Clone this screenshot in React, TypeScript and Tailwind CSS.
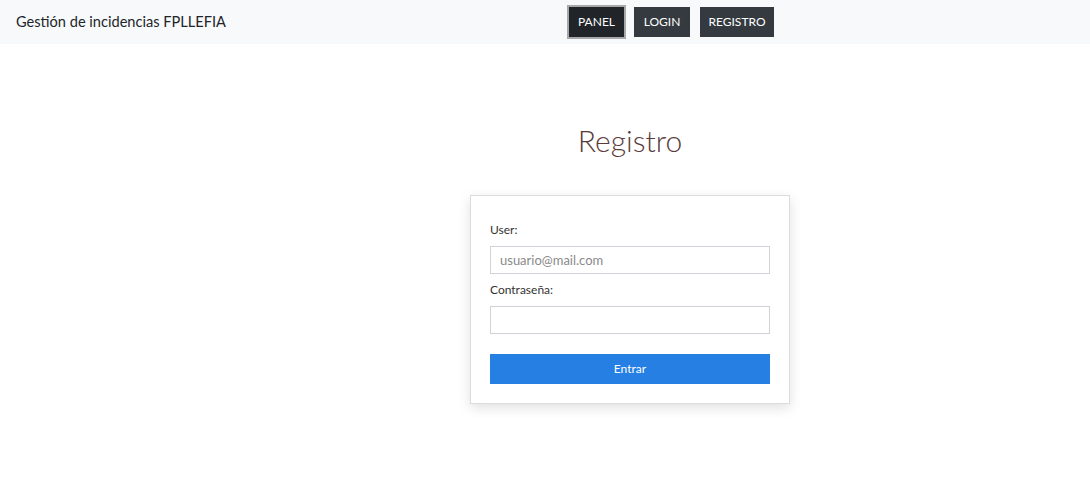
import React from "react";

export default function App() {
  return (
    <div className="min-h-[489px] bg-white text-[#212529]" style={{ fontFamily: "Lato, 'Open Sans', sans-serif" }}>
      <nav className="flex h-[44px] items-center bg-[#f8f9fa] pl-[16px]">
        <span className="w-[553px] text-[14.6px] leading-none text-[#212529]">Gestión de incidencias FPLLEFIA</span>
        <div className="flex items-center gap-[10px]">
          <button className="flex h-[30px] w-[55px] items-center justify-center bg-[#212529] text-[12px] text-white outline-2 outline-[#a8a8a8]">PANEL</button>
          <button className="flex h-[30px] w-[56px] items-center justify-center bg-[#343a40] text-[12px] text-white">LOGIN</button>
          <button className="flex h-[30px] w-[74px] items-center justify-center bg-[#343a40] text-[12px] text-white">REGISTRO</button>
        </div>
      </nav>
      <main className="ml-[170px] flex w-[920px] flex-col items-center pt-[78px]">
        <h1 className="text-[30px] font-light leading-[36px] text-[#5a3b3b]">Registro</h1>
        <div className="mt-[37px] w-[320px] border border-[#dcdcdc] bg-white px-[19px] pb-[19px] pt-[26px] shadow-[0_4px_12px_rgba(0,0,0,0.12)]">
          <label className="block text-[12px] leading-[16px] text-[#333]">User:</label>
          <input
            className="mt-[8px] block h-[28px] w-[280px] border border-[#cfd3d9] px-[9px] text-[13px] text-[#333] placeholder:text-[#8a8a8a] outline-none"
            placeholder="usuario@mail.com"
          />
          <label className="mt-[8px] block text-[12px] leading-[16px] text-[#333]">Contraseña:</label>
          <input type="password" className="mt-[8px] block h-[28px] w-[280px] border border-[#cfd3d9] px-[9px] text-[13px] outline-none" />
          <button className="mt-[20px] flex h-[30px] w-[280px] items-center justify-center bg-[#2680e3] text-[12px] text-white">Entrar</button>
        </div>
      </main>
    </div>
  );
}
